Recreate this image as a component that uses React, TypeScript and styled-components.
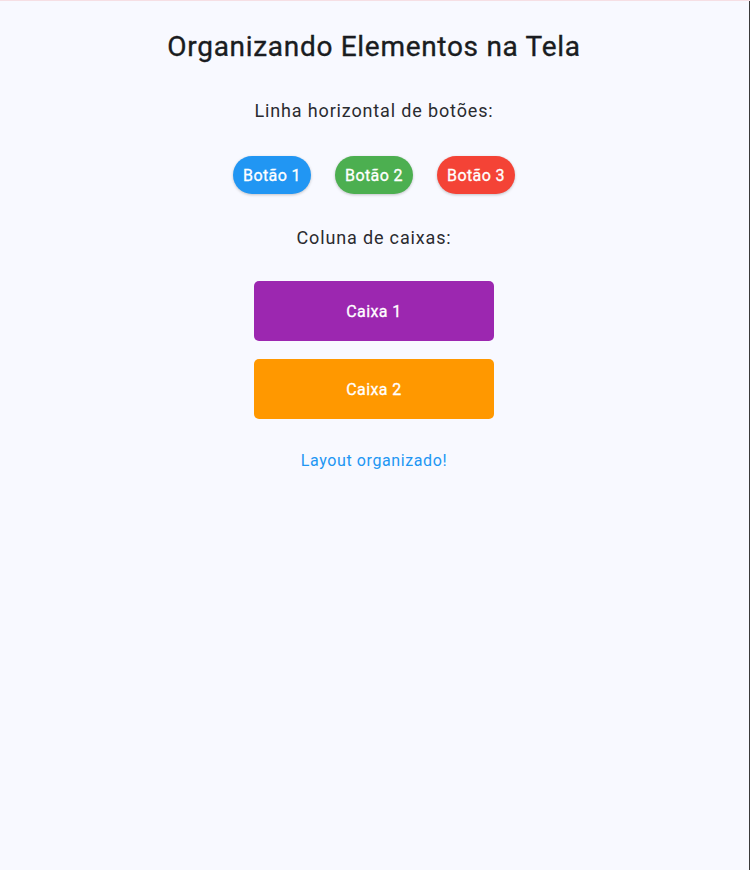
import React from "react";
import styled, { createGlobalStyle } from "styled-components";

const Global = createGlobalStyle`
  html, body { margin: 0; padding: 0; background: #f8f9ff; }
  body { font-family: Roboto, "Noto Sans", "Liberation Sans", sans-serif; }
`;

const Frame = styled.div`
  box-sizing: border-box;
  width: 750px;
  min-height: 870px;
  padding-right: 2px;
  background: #f8f9ff;
  border-top: 1px solid #f6dfe4;
  box-shadow: inset -1px 0 0 #3a3a3a;
  display: flex;
  flex-direction: column;
  align-items: center;
  color: #1b1b1f;
`;

const Title = styled.h1`
  margin: 28px 0 0;
  font-size: 28px;
  font-weight: 400;
  line-height: 36px;
  letter-spacing: 0.7px;
  color: #1a1c20;
  -webkit-text-stroke: 0.35px #1a1c20;
`;

const Label = styled.p<{ $top: number }>`
  margin: ${(p) => p.$top}px 0 0;
  font-size: 18px;
  line-height: 24px;
  letter-spacing: 0.85px;
  color: #2a2b30;
`;

const Row = styled.div`
  margin-top: 33px;
  display: flex;
  gap: 24px;
`;

const Pill = styled.button<{ $bg: string }>`
  width: 78px;
  height: 38px;
  padding: 0;
  border: none;
  border-radius: 19px;
  background: ${(p) => p.$bg};
  color: #fff;
  font-family: inherit;
  font-size: 16px;
  font-weight: 400;
  letter-spacing: 0.4px;
  -webkit-text-stroke: 0.3px #fff;
  box-shadow: 0 1px 3px rgba(0, 0, 0, 0.22);
`;

const Column = styled.div`
  margin-top: 31px;
  display: flex;
  flex-direction: column;
  gap: 18px;
`;

const Box = styled.div<{ $bg: string }>`
  width: 240px;
  height: 60px;
  border-radius: 5px;
  background: ${(p) => p.$bg};
  color: #fff;
  display: flex;
  align-items: center;
  justify-content: center;
  font-size: 16px;
  font-weight: 400;
  letter-spacing: 0.4px;
  -webkit-text-stroke: 0.3px #fff;
`;

const Footer = styled.p`
  margin: 31px 0 0;
  font-size: 16px;
  line-height: 22px;
  letter-spacing: 0.6px;
  color: #2196f3;
`;

export default function App() {
  return (
    <>
      <Global />
      <Frame>
        <Title>Organizando Elementos na Tela</Title>
        <Label $top={34}>Linha horizontal de botões:</Label>
        <Row>
          <Pill $bg="#2196f3">Botão 1</Pill>
          <Pill $bg="#4caf50">Botão 2</Pill>
          <Pill $bg="#f44336">Botão 3</Pill>
        </Row>
        <Label $top={32}>Coluna de caixas:</Label>
        <Column>
          <Box $bg="#9c27b0">Caixa 1</Box>
          <Box $bg="#ff9800">Caixa 2</Box>
        </Column>
        <Footer>Layout organizado!</Footer>
      </Frame>
    </>
  );
}
